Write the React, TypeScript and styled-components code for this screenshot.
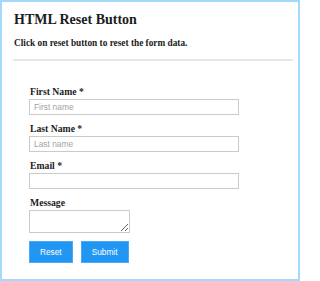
import styled, { createGlobalStyle } from 'styled-components';

const GlobalStyle = createGlobalStyle`
  html, body {
    margin: 0;
    padding: 0;
    background: #fff;
  }
`;

export default function App() {
  return (
    <>
      <GlobalStyle />
      <Frame>
        <Title>HTML Reset Button</Title>
        <Intro>Click on reset button to reset the form data.</Intro>
        <Divider />

        <Form onSubmit={(e) => e.preventDefault()}>
          <Field>
            <Label htmlFor="firstName">First Name *</Label>
            <Input id="firstName" type="text" placeholder="First name" />
          </Field>

          <Field>
            <Label htmlFor="lastName">Last Name *</Label>
            <Input id="lastName" type="text" placeholder="Last name" />
          </Field>

          <Field>
            <Label htmlFor="email">Email *</Label>
            <Input id="email" type="email" />
          </Field>

          <Field>
            <Label htmlFor="message">Message</Label>
            <Message id="message" />
          </Field>

          <Buttons>
            <Button type="reset">Reset</Button>
            <Button type="submit">Submit</Button>
          </Buttons>
        </Form>
      </Frame>
    </>
  );
}

const Frame = styled.div`
  box-sizing: border-box;
  width: 300px;
  height: 281px;
  border: 2px solid #a3dafc;
  padding: 10px 5px 0 12px;
  font-family: 'Liberation Serif', 'Times New Roman', serif;
  color: #1c1c1c;
`;

const Title = styled.h2`
  margin: 0;
  font-size: 14px;
  line-height: 16px;
  font-weight: bold;
`;

const Intro = styled.p`
  margin: 10px 0 0;
  font-size: 9.3px;
  line-height: 11px;
  font-weight: bold;
`;

const Divider = styled.hr`
  margin: 10px 0 0 -1px;
  border: 0;
  height: 2px;
  background: #e6e6e6;
`;

const Form = styled.form`
  display: flex;
  flex-direction: column;
  margin: 25px 0 0 15px;
`;

const Field = styled.div`
  display: flex;
  flex-direction: column;
  align-items: flex-start;
  margin-bottom: 8px;
`;

const Label = styled.label`
  display: block;
  margin: 0 0 2px 1px;
  font-size: 9.7px;
  line-height: 11px;
  font-weight: bold;
`;

const Input = styled.input`
  box-sizing: border-box;
  width: 210px;
  height: 16px;
  margin: 0;
  padding: 0 4px;
  border: 1px solid #cacaca;
  border-radius: 0;
  font-family: 'Liberation Sans', Arial, sans-serif;
  font-size: 8.4px;
  color: #333;
  outline: none;

  &::placeholder {
    color: #a4a4a4;
  }
`;

const Message = styled.textarea`
  box-sizing: border-box;
  width: 101px;
  height: 23px;
  margin: 0;
  padding: 2px 4px;
  border: 1px solid #cacaca;
  border-radius: 0;
  font-family: 'Liberation Sans', Arial, sans-serif;
  font-size: 8px;
`;

const Buttons = styled.div`
  display: flex;
  gap: 8px;
`;

const Button = styled.button`
  box-sizing: border-box;
  height: 22px;
  padding: 0 10px;
  border: 1px solid #4aaaf5;
  border-radius: 0;
  background: #2196f3;
  color: #fff;
  font-family: 'Liberation Sans', Arial, sans-serif;
  font-size: 8.3px;
  cursor: pointer;
`;
